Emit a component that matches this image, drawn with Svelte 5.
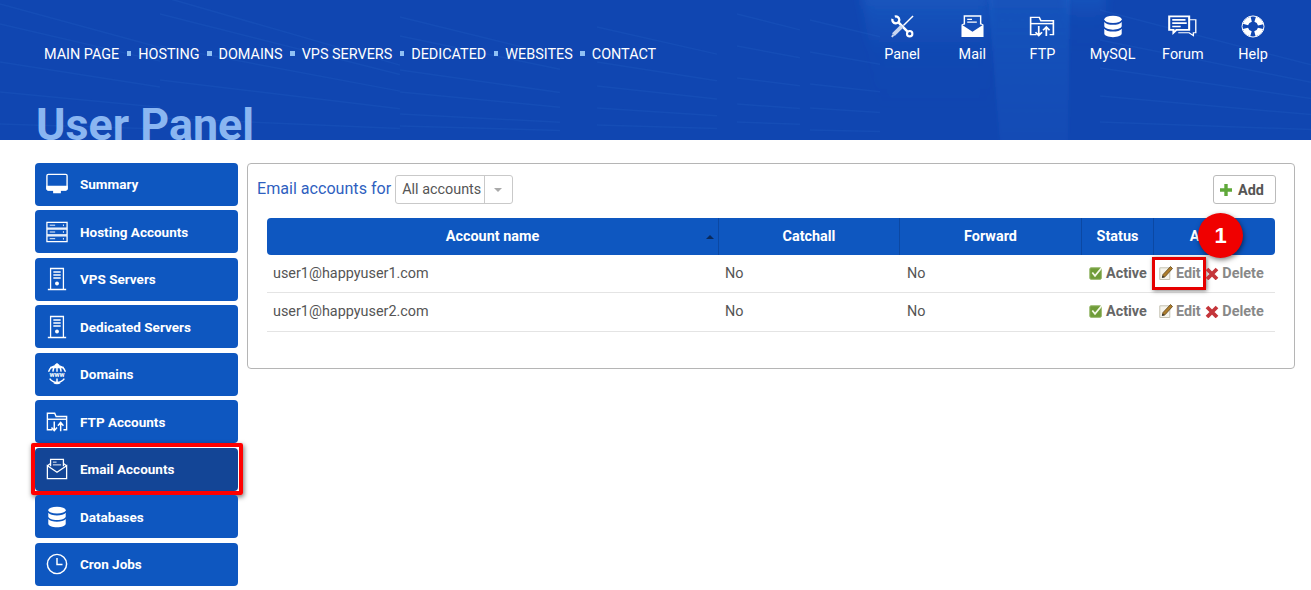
<script>
  const navLinks = ["MAIN PAGE", "HOSTING", "DOMAINS", "VPS SERVERS", "DEDICATED", "WEBSITES", "CONTACT"];
  const topTools = [
    { label: "Panel", icon: "wrench" },
    { label: "Mail", icon: "mailfull" },
    { label: "FTP", icon: "ftp" },
    { label: "MySQL", icon: "db" },
    { label: "Forum", icon: "chat" },
    { label: "Help", icon: "ring" }
  ];
  const sideItems = [
    { label: "Summary", icon: "monitor" },
    { label: "Hosting Accounts", icon: "rack" },
    { label: "VPS Servers", icon: "tower" },
    { label: "Dedicated Servers", icon: "tower" },
    { label: "Domains", icon: "www" },
    { label: "FTP Accounts", icon: "ftp" },
    { label: "Email Accounts", icon: "mail", active: true },
    { label: "Databases", icon: "db" },
    { label: "Cron Jobs", icon: "clock" }
  ];
  const accounts = [
    { name: "user1@happyuser1.com", marked: true },
    { name: "user1@happyuser2.com", marked: false }
  ];

  // faint rack shelves in the header photo, steeper near the top
  const shelves = [
    { x1: 0, x2: 160, ys: [4, 24, 62, 92, 124] },
    { x1: 160, x2: 400, ys: [-4, 14, 46, 80, 118] },
    { x1: 400, x2: 560, ys: [17, 36, 70, 92, 114, 126] },
    { x1: 597, x2: 717, ys: [27, 62, 86, 108, 125] },
    { x1: 737, x2: 800, ys: [14, 46, 78, 104, 122] },
    { x1: 810, x2: 880, ys: [20, 52, 84, 108, 130] },
    { x1: 1100, x2: 1311, ys: [10, 40, 68, 96, 122] }
  ];
  const lines = shelves.flatMap((s) =>
    s.ys.map((y) => ({ x1: s.x1, x2: s.x2, y1: y, y2: y + ((140 - y) * 0.24 * (s.x2 - s.x1)) / 120 }))
  );
</script>

{#snippet icon(name)}
  <svg class="ico {name}" viewBox="0 0 24 24" preserveAspectRatio="none" fill="none" stroke="#fff" stroke-width="1.4">
    {#if name === "monitor"}
      <rect x="1" y="1.500" width="22" height="17" rx="1.500" stroke-width="1.500" />
      <path d="M1 14.500h22v2.500a1.500 1.500 0 0 1-1.500 1.500h-19A1.500 1.500 0 0 1 1 17z" fill="#fff" />
      <path d="M8.500 18.500h7v3h-7z" fill="#fff" />
    {:else if name === "rack"}
      <rect x="1" y="1.500" width="22" height="6.300" /><rect x="1" y="8.800" width="22" height="6.300" /><rect x="1" y="16.200" width="22" height="6.300" />
      <path d="M4 4.600h6M4 12h6M4 19.300h6M19 3.800v1.800M19 11.100v1.800M19 18.500v1.800" stroke-width="1" />
    {:else if name === "tower"}
      <path d="M5 22V1.500h14V22M2 22.500h20" />
      <path d="M8 5h8M8 8h8M8 11h8" stroke-width="1.700" />
      <circle cx="12" cy="16.500" r="1.400" fill="#fff" />
    {:else if name === "www"}
      <path d="M2.800 9.500a9.800 9.800 0 0 1 18.400 0M4 17a9.800 9.800 0 0 0 16 0M12 1v8.500M12 17v5.500M7.500 9.500c.5-4 2-7 4.500-8.500 2.500 1.500 4 4.500 4.500 8.500M4.500 5h15M8 21c1 .8 2.500 1.500 4 1.500s3-.7 4-1.500" stroke-width="1.600" />
      <text x="12" y="15.800" text-anchor="middle" fill="#fff" stroke="none" class="www">www</text>
    {:else if name === "ftp"}
      <path d="M7 20.500H1.500V2.500h8L11 6h11.500v14.500H19" stroke-width="1.500" />
      <path d="M1.500 9h21" stroke-width="1.500" />
      <path d="M9 11.500v10M6 18l3 3.500 3-3.500M16 22V12.500M13 16l3-3.500 3 3.500" stroke-width="1.600" />
    {:else if name === "mail"}
      <path d="M5 9V1.500h14V9M1.500 8.500 5 6M22.500 8.500 19 6M1.500 8.500v14h21v-14L12 15.500z" />
      <path d="M7.500 4.500h4M7.500 7.500h9" stroke-width="1" />
    {:else if name === "db"}
      <ellipse cx="12" cy="4.500" rx="9.500" ry="3.800" fill="#fff" stroke="none" />
      <path d="M2.500 7.300v4.200c0 2.100 4.200 3.800 9.500 3.800s9.500-1.700 9.500-3.800V7.300c-1.600 2-5.300 3-9.500 3s-7.900-1-9.500-3z" fill="#fff" stroke="none" />
      <path d="M2.500 14.300v5c0 2.100 4.200 3.800 9.500 3.800s9.500-1.700 9.500-3.800v-5c-1.600 2-5.300 3-9.500 3s-7.900-1-9.500-3z" fill="#fff" stroke="none" />
    {:else if name === "clock"}
      <circle cx="12" cy="12" r="10.500" stroke-width="1.600" />
      <path d="M12 5.500V12.500H18" stroke-width="1.600" />
    {:else if name === "wrench"}
      <path d="M1.600 4A3.600 3.600 0 1 0 4 1.600" stroke-width="2.400" />
      <path d="M7.500 7.500 17 17" stroke-width="2.600" />
      <circle cx="19.500" cy="19.500" r="2.800" stroke-width="2.200" />
      <path d="M23 1 13 11" stroke-width="1.500" />
      <path d="M11.500 11.500 2.500 20.500" stroke="#c9d6ef" stroke-width="4" />
      <path d="M2.500 20.500 1 23" stroke="#c9d6ef" stroke-width="2" />
    {:else if name === "mailfull"}
      <path d="M3.500 10V1h17v9" stroke-width="1.500" />
      <path d="M6.500 4.500h5M6.500 7.500h10" stroke-width="1.200" />
      <path d="M1 10.500 3.500 9v-.5M23 10.500 20.500 9" stroke-width="1.200" />
      <path d="M.5 10 12 17.500 23.500 10v13H.5z" fill="#fff" stroke="none" />
    {:else if name === "chat"}
      <path d="M1 1.500h16.500v14H7l-2.500 3v-3H1z" stroke-width="1.700" />
      <path d="M3.500 5h11M3.500 8.500h12M3.500 12h7" stroke-width="1.800" />
      <path d="M18 5h5v13.500h-2v3l-3.500-3H8.500" stroke-width="1.100" />
    {:else if name === "ring"}
      <circle cx="12" cy="12" r="11" stroke-width="1" />
      <circle cx="12" cy="12" r="7.800" stroke-width="5.400" stroke-dasharray="8.200 4.050" stroke-dashoffset="-2" />
    {/if}
  </svg>
{/snippet}

{#snippet statusIcon()}
  <svg class="mini" viewBox="0 0 14 14">
    <rect x=".8" y="1.800" width="11.500" height="11.500" rx="1.200" fill="#6f9c38" stroke="#93b565" />
    <path d="M3.300 6.500 6 9.800 12.500 2" fill="none" stroke="#f4f8e8" stroke-width="1.800" />
  </svg>
{/snippet}

{#snippet editIcon()}
  <svg class="mini" viewBox="0 0 14 14">
    <path d="M.8 1.800h10V13.500H.8z" fill="#f6f4ec" stroke="#c4c1b2" />
    <path d="M3.500 11.200 4 8.500 11.500.5l2 2L6 10.800z" fill="#ad7c2a" stroke="#5e4419" stroke-width=".8" />
    <path d="M2.800 12 3.500 9.500 5.800 11.200z" fill="#3e3a30" />
  </svg>
{/snippet}

{#snippet deleteIcon()}
  <svg class="mini" viewBox="0 0 14 14">
    <path d="M2 3 12 13M12 3 2 13" stroke="#c4353a" stroke-width="3.800" />
  </svg>
{/snippet}

<div class="page">
  <header>
    <svg class="photo" viewBox="0 0 1311 140">
      <defs>
        <linearGradient id="glow" x1="0" y1="0" x2="0" y2="1">
          <stop offset="0" stop-color="#2a78d8" stop-opacity=".26" />
          <stop offset=".55" stop-color="#2a78d8" stop-opacity=".16" />
          <stop offset="1" stop-color="#2a78d8" stop-opacity=".1" />
        </linearGradient>
        <linearGradient id="fade" x1="0" y1="0" x2="0" y2="1">
          <stop offset="0" stop-color="#2a78d8" stop-opacity=".34" />
          <stop offset=".5" stop-color="#2a78d8" stop-opacity=".04" />
          <stop offset="1" stop-color="#2a78d8" stop-opacity="0" />
        </linearGradient>
        <filter id="soft" x="-20%" y="-20%" width="140%" height="140%"><feGaussianBlur stdDeviation="5" /></filter>
        <filter id="softer" x="-20%" y="-20%" width="140%" height="140%"><feGaussianBlur stdDeviation="1.500" /></filter>
      </defs>
      <g filter="url(#soft)">
        <path d="M860 -10h130v120H880z" fill="url(#fade)" />
        <path d="M1066 -10h40v60h-40z" fill="url(#fade)" />
      </g>
      <path d="M988 -6h82l-2 150H1000z" fill="url(#glow)" filter="url(#softer)" />
      {#each lines as l}
        <line x1={l.x1} x2={l.x2} y1={l.y1} y2={l.y2} stroke="#3f86e0" stroke-opacity=".11" stroke-width="1.500" />
      {/each}
    </svg>
    <nav class="links">
      {#each navLinks as link, i}
        {#if i > 0}<span class="sep"></span>{/if}
        <span>{link}</span>
      {/each}
    </nav>
    <div class="tools">
      {#each topTools as tool}
        <div class="tool">
          {@render icon(tool.icon)}
          <span>{tool.label}</span>
        </div>
      {/each}
    </div>
    <h1>User Panel</h1>
  </header>

  <main>
    <aside>
      {#each sideItems as item}
        <div class="side" class:active={item.active}>
          <span class="side-ico">{@render icon(item.icon)}</span>
          <span>{item.label}</span>
        </div>
      {/each}
    </aside>

    <section class="card">
      <div class="bar">
        <span class="for">Email accounts for</span>
        <div class="select"><span class="value">All accounts</span><span class="caret"></span></div>
        <button class="add">
          <svg class="plus" viewBox="0 0 12 12"><path d="M4.300 0h3.400v4.300H12v3.400H7.700V12H4.300V7.700H0V4.300h4.300z" fill="#5fa83a" /></svg>
          Add
        </button>
      </div>
      <table>
        <colgroup><col class="c1" /><col class="c2" /><col class="c3" /><col class="c4" /><col /></colgroup>
        <thead>
          <tr>
            <th class="sorted">Account name<span class="sort"></span></th>
            <th>Catchall</th>
            <th>Forward</th>
            <th>Status</th>
            <th class="acts">Actions<span class="badge">1</span></th>
          </tr>
        </thead>
        <tbody>
          {#each accounts as acc}
            <tr>
              <td>{acc.name}</td>
              <td>No</td>
              <td>No</td>
              <td class="status">{@render statusIcon()}Active</td>
              <td class="ops">
                <span class="op" class:marked={acc.marked}>{@render editIcon()}Edit</span>
                <span class="op">{@render deleteIcon()}Delete</span>
              </td>
            </tr>
          {/each}
        </tbody>
      </table>
    </section>
  </main>
</div>

<style>
  :global(body) { margin: 0; background: #fff; font-family: Roboto, "Liberation Sans", sans-serif; overflow: hidden; }
  .page { width: 1311px; height: 590px; overflow: hidden; background: #fff; }

  header { position: relative; height: 140px; overflow: hidden; color: #fff; background: #1046b1; }
  .photo { position: absolute; inset: 0; width: 1311px; height: 140px; }
  .links { position: relative; display: flex; align-items: center; padding: 47px 0 0 44px; font-size: 14.400px; line-height: 16px; }
  .sep { width: 4.500px; height: 5px; margin: 0 7px 3px 7.500px; background: #8fc0f4; }
  .tools { position: absolute; top: 15px; left: 867px; display: flex; }
  .tool { display: flex; flex-direction: column; align-items: center; width: 70.200px; font-size: 14.400px; line-height: 16px; }
  .tool .ico { width: 23px; height: 23px; margin-bottom: 9px; }
  .tool .ftp { width: 26px; }
  .tool .db { width: 22px; }
  .tool .chat { width: 29px; }
  .tool .ring { width: 24px; }
  h1 { position: absolute; top: 97px; left: 36px; margin: 0; color: #8ab6f1; font-size: 44.800px; font-weight: 700; line-height: 56px; }

  main { display: flex; gap: 9px; padding: 22.500px 16px 0 35px; }
  aside { display: flex; flex-direction: column; gap: 4.500px; width: 203px; flex: none; }
  .side {
    position: relative;
    display: flex;
    align-items: center;
    height: 43px;
    border-radius: 4px;
    background: #0e57c0;
    color: #fff;
    font-size: 13.500px;
    font-weight: 700;
  }
  .side-ico { display: flex; justify-content: center; width: 43px; margin-right: 2px; }
  .side-ico .ico { width: 22px; height: 22px; }
  .side-ico .tower { height: 24px; }
  .active { background: #134596; }
  .active::after {
    content: "";
    position: absolute;
    inset: -5px -4.500px -4px -4px;
    border: 4px solid #f00;
    border-radius: 2px;
    box-shadow: 1px 2px 5px rgba(0, 0, 0, .55);
  }

  .card {
    flex: 1;
    align-self: flex-start;
    box-sizing: border-box;
    height: 206px;
    margin-top: .5px;
    padding: 11px 19px 0;
    border: 1px solid #b5b5b5;
    border-radius: 4px;
  }
  .bar { display: flex; align-items: center; height: 29px; margin: 0 -1px 14px -10px; }
  .for { margin: 0 4px 3px 0; color: #2f5fc0; font-size: 16.100px; }
  .select { display: flex; height: 29px; box-sizing: border-box; border: 1px solid #c9c9c9; border-radius: 3px; color: #555; font-size: 14.400px; line-height: 27px; }
  .value { width: 89px; box-sizing: border-box; padding-left: 6px; border-right: 1px solid #c9c9c9; white-space: nowrap; }
  .caret { width: 27px; position: relative; }
  .caret::after { content: ""; position: absolute; top: 12px; left: 9px; border: 4px solid transparent; border-top: 4px solid #aaa; }
  .add {
    display: flex;
    align-items: center;
    gap: 6px;
    box-sizing: border-box;
    height: 29px;
    width: 63px;
    margin-left: auto;
    padding: 1px 0 0 6px;
    border: 1px solid #bbb;
    border-radius: 3px;
    background: #fff;
    color: #555;
    font: 700 14.400px Roboto, sans-serif;
  }
  .plus { width: 12px; height: 12px; }

  table { width: 1008px; border-collapse: separate; border-spacing: 0; table-layout: fixed; font-size: 14.400px; color: #555; }
  .c1 { width: 451px; } .c2 { width: 181px; } .c3 { width: 182px; } .c4 { width: 72px; }
  th { position: relative; height: 37px; padding: 0 0 1px; box-sizing: border-box; background: #0e57c0; color: #fff; font-size: 14.400px; font-weight: 700; border-left: 1px solid #0b48a3; }
  th:first-child { border-left: 0; border-radius: 4px 0 0 4px; }
  th:last-child { border-radius: 0 4px 4px 0; }
  .sort { position: absolute; top: 17px; right: 4px; border: 4.500px solid transparent; border-top: 0; border-bottom: 4px solid #0a2a5c; }
  .badge {
    position: absolute;
    top: -5px;
    left: 44px;
    width: 45px;
    height: 45px;
    border-radius: 50%;
    background: #f00000;
    box-shadow: 1px 2px 5px rgba(0, 0, 0, .5);
    color: #fff;
    font: 700 22px/45px "Liberation Sans", sans-serif;
    text-align: center;
  }
  td { height: 38px; box-sizing: border-box; padding: 9px 7px 0; line-height: 20px; vertical-align: top; border-bottom: 1px solid #e4e4e4; }
  td:first-child { padding-left: 6px; }
  td:nth-child(3) { padding-left: 8px; }
  tbody tr:last-child td { height: 39px; }
  .status { padding: 9px 0 0 8px; font-weight: 700; white-space: nowrap; color: #666; }
  .ops { padding: 9px 0 0 6px; white-space: nowrap; font-weight: 700; color: #888; }
  .op { position: relative; display: inline-block; margin-right: 1px; }
  .mini { width: 14px; height: 14px; margin-right: 3px; vertical-align: -2px; }
  .marked::after {
    content: "";
    position: absolute;
    inset: -7px -5px -6px -7px;
    border: 3px solid #e60000;
    box-shadow: 1px 1px 4px rgba(0, 0, 0, .5);
  }
  .www { font-size: 7.500px; font-weight: 700; font-family: Roboto, sans-serif; }
</style>
